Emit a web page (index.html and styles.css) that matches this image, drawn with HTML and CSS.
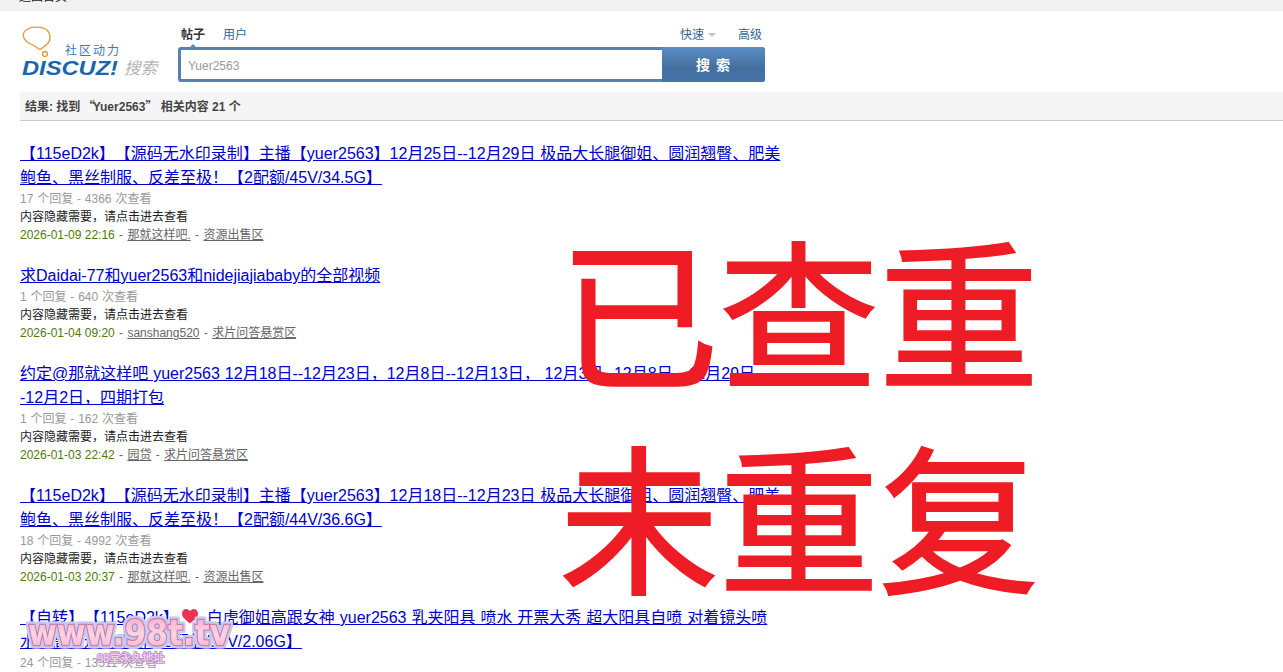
FILE: index.html
```html
<!DOCTYPE html>
<html lang="zh-CN">
<head>
<meta charset="utf-8">
<title>搜索结果</title>
<link rel="stylesheet" href="styles.css">
</head>
<body>
<div class="topbar"><span class="topbar-text">返回首页</span></div>
<header class="search-head">
  <svg class="logo" width="140" height="56" viewBox="0 0 140 56" aria-label="Discuz">
    <path class="bubble" d="M7.700 3C11 0.500 22 0 27 4C31 8 31 15 27 18C25 20 24 21 23.300 21C21 24 19 24 17 21.500C14 19 10 18 8 16.500C3 13 0.500 7 7.700 3Z"/>
    <circle class="bubble" cx="25" cy="28" r="2.500"/>
    <text class="logo-cn" x="45" y="29">社区动力</text>
    <text class="logo-en" x="2" y="49" textLength="96" lengthAdjust="spacingAndGlyphs">DISCUZ!</text>
    <text class="logo-search" x="104" y="48">搜索</text>
  </svg>
  <div class="search-main">
    <div class="tabs">
      <div class="tabs-left">
        <a class="tab tab-on">帖子</a>
        <a class="tab">用户</a>
      </div>
      <div class="tabs-right">
        <a class="tab">快速<i class="caret"></i></a>
        <a class="tab">高级</a>
      </div>
    </div>
    <form class="search-box">
      <div class="search-input">Yuer2563</div>
      <div class="search-btn">搜 索</div>
    </form>
  </div>
</header>
<div class="result-bar">结果: 找到 <span class="quote quote-open">“</span>Yuer2563<span class="quote">”</span> 相关内容 21 个</div>
<ul class="results">
  <li class="item">
    <h3 class="item-title"><a href="#">【115eD2k】【源码无水印录制】主播【yuer2563】12月25日--12月29日 极品大长腿御姐、圆润翘臀、肥美鲍鱼、黑丝制服、反差至极！【2配额/45V/34.5G】</a></h3>
    <p class="item-meta">17 个回复 - 4366 次查看</p>
    <p class="item-note">内容隐藏需要，请点击进去查看</p>
    <p class="item-info"><span class="date">2026-01-09 22:16</span> - <a href="#">那就这样吧.</a> - <a href="#">资源出售区</a></p>
  </li>
  <li class="item">
    <h3 class="item-title"><a href="#">求Daidai-77和yuer2563和nidejiajiababy的全部视频</a></h3>
    <p class="item-meta">1 个回复 - 640 次查看</p>
    <p class="item-note">内容隐藏需要，请点击进去查看</p>
    <p class="item-info"><span class="date">2026-01-04 09:20</span> - <a href="#">sanshang520</a> - <a href="#">求片问答悬赏区</a></p>
  </li>
  <li class="item">
    <h3 class="item-title"><a href="#">约定@那就这样吧 yuer2563 12月18日--12月23日，12月8日--12月13日， 12月3日--12月8日，11月29日--12月2日，四期打包</a></h3>
    <p class="item-meta">1 个回复 - 162 次查看</p>
    <p class="item-note">内容隐藏需要，请点击进去查看</p>
    <p class="item-info"><span class="date">2026-01-03 22:42</span> - <a href="#">园贷</a> - <a href="#">求片问答悬赏区</a></p>
  </li>
  <li class="item">
    <h3 class="item-title"><a href="#">【115eD2k】【源码无水印录制】主播【yuer2563】12月18日--12月23日 极品大长腿御姐、圆润翘臀、肥美鲍鱼、黑丝制服、反差至极！【2配额/44V/36.6G】</a></h3>
    <p class="item-meta">18 个回复 - 4992 次查看</p>
    <p class="item-note">内容隐藏需要，请点击进去查看</p>
    <p class="item-info"><span class="date">2026-01-03 20:37</span> - <a href="#">那就这样吧.</a> - <a href="#">资源出售区</a></p>
  </li>
  <li class="item">
    <h3 class="item-title"><a href="#">【自转】【115eD2k】<svg class="heart" width="16" height="15" viewBox="0 0 16 15" aria-hidden="true"><path class="heart-path" d="M8 14.500C3 10.500 0 8 0 4.500C0 1.800 2 0 4.300 0C6 0 7.300 1 8 2.300C8.700 1 10 0 11.700 0C14 0 16 1.800 16 4.500C16 8 13 10.500 8 14.500Z"/></svg> 白虎御姐高跟女神 yuer2563 乳夹阳具 喷水 开票大秀 超大阳具自喷 对着镜头喷水，高潮连连不断【2配额/30V/2.06G】</a></h3>
    <p class="item-meta">24 个回复 - 13511 次查看</p>
  </li>
</ul>
<div class="stamp"><div>已查重</div><div>未重复</div></div>
<div class="watermark">
  <svg class="wm-svg" width="220" height="45" viewBox="0 0 220 45">
    <defs>
      <linearGradient id="wmfill" x1="0" y1="0" x2="0" y2="1">
        <stop offset="0" stop-color="#f7a9c8"/>
        <stop offset="0.55" stop-color="#fbd5e4"/>
        <stop offset="1" stop-color="#f5a8c8"/>
      </linearGradient>
    </defs>
    <text class="wm-main" x="4" y="35" textLength="202" lengthAdjust="spacingAndGlyphs" fill="url(#wmfill)">www.98t.tv</text>
  </svg>
  <div class="wm-sub">98堂永久地址</div>
</div>
</body>
</html>
```
FILE: styles.css
```css
* { box-sizing: border-box; }
html, body { margin: 0; padding: 0; height: 672px; overflow: hidden; background: #fff; }
body { font-family: "Liberation Sans", "Noto Sans CJK SC", sans-serif; font-size: 12px; color: #444; position: relative; text-spacing-trim: space-all; }
a { color: inherit; }
.topbar { height: 11px; background: #f2f2f2; overflow: hidden; padding-left: 19px; }
.topbar-text { display: block; margin-top: -11px; font-size: 12px; line-height: 16px; color: #222; }
.search-head { display: flex; height: 81px; padding: 15px 0 0 20px; }
.logo { display: block; width: 140px; height: 56px; flex: none; overflow: visible; }
.bubble { fill: none; stroke: #e39a3a; stroke-width: 1.300; }
.logo-cn { font-size: 12px; fill: #3f77ae; letter-spacing: 2px; }
.logo-en { font-size: 21px; font-weight: 700; font-style: italic; fill: #1a66ae; }
.logo-search { font-size: 16.500px; font-style: italic; fill: #b5b5b5; }
.search-main { width: 587px; margin-left: 18px; }
.tabs { display: flex; justify-content: space-between; height: 21px; align-items: center; padding: 0 3px 3px 3px; }
.tabs-left, .tabs-right { display: flex; gap: 18px; }
.tabs-right { gap: 22px; }
.tab { color: #36648f; font-size: 12px; line-height: 16px; }
.tab-on { color: #333; font-weight: 700; position: relative; }
.tab-on::after { content: ""; position: absolute; left: 8px; bottom: -5px; border: 4px solid transparent; border-top: 0; border-bottom-color: #5b87bb; }
.caret { display: inline-block; margin-left: 4px; vertical-align: 2px; border: 4px solid transparent; border-bottom: 0; border-top-color: #c4c4c4; }
.search-box { display: flex; height: 35px; background: #5680b6; border-radius: 3px; padding: 3px 0 3px 3px; }
.search-input { width: 481px; background: #fff; color: #999; font-size: 12px; line-height: 30px; padding: 1px 0 0 7px; }
.search-btn { flex: 1; margin: -3px 0; border-radius: 0 3px 3px 0; background: linear-gradient(#5a8ec6, #44709f 60%, #4474ac); color: #fff; font-size: 14px; font-weight: 700; text-align: center; line-height: 34px; letter-spacing: 1px; padding-top: 1px; }
.result-bar { height: 29px; margin-left: 20px; padding-left: 5px; background: #f5f5f5; border-bottom: 1px solid #ccc; font-weight: 700; font-size: 12px; line-height: 28px; color: #444; white-space: pre-wrap; }
.quote { font-family: "Noto Sans CJK SC", sans-serif; }
.quote-open { margin-left: -1px; margin-right: -2px; }
.results { list-style: none; margin: 20px 0 0 20px; padding: 0; width: 762px; }
.item { margin-bottom: 19px; padding-top: 1px; }
.item-title { margin: 0; font-size: 16px; font-weight: 400; line-height: 24px; color: #0000cc; word-spacing: 0.500px; }
.item-title a { text-decoration: underline; }
.heart { vertical-align: -1px; margin: 0 4px 0 3px; }
.heart-path { fill: #ea3350; }
.item-meta, .item-note, .item-info { margin: 0; font-size: 12px; line-height: 18px; }
.item-meta { color: #999; word-spacing: 0.500px; }
.item-note { color: #222; }
.item-info { color: #666; word-spacing: 1px; }
.date { color: #4f7a0c; word-spacing: 0; }
.stamp { position: absolute; left: 559px; top: 205px; font-size: 160px; line-height: 205px; font-family: "Noto Sans CJK SC", sans-serif; font-weight: 400; -webkit-text-stroke: 2px #ee1c25; color: #ee1c25; white-space: nowrap; }
.watermark { position: absolute; left: 24px; top: 610px; }
.wm-svg { display: block; overflow: visible; filter: drop-shadow(2px 0 0 #c8ccf3) drop-shadow(-2px 0 0 #c8ccf3) drop-shadow(0 2px 0 #c8ccf3) drop-shadow(0 -2px 0 #c8ccf3); }
.wm-main { font-family: "DejaVu Sans", sans-serif; font-weight: 700; font-size: 35px; stroke: #c77fae; stroke-width: 2.500px; paint-order: stroke fill; }
.wm-sub { margin: -3px 0 0 73px; font-size: 11px; line-height: 12px; color: #fbe3f0; -webkit-text-stroke: 2px #c08ed0; paint-order: stroke fill; white-space: nowrap; }
```
